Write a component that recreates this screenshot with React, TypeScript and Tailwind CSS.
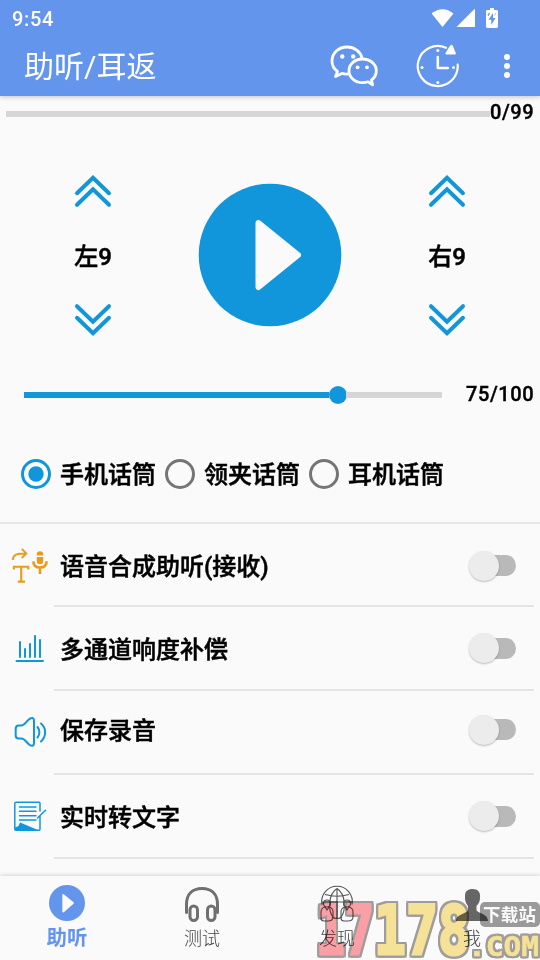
import React from 'react';

const BLUE = '#1296db';

function WifiIcon() {
  return (
    <svg width="54" height="22" viewBox="0 0 54 22" fill="#fff">
      <path d="M-0.500 4.500 Q10.500 -4.200 21.500 4.500 L10.500 18Z" />
      <path d="M43 -0.500V18H24.500Z" />
    </svg>
  );
}

function BatteryIcon() {
  return (
    <svg width="12" height="20" viewBox="0 0 12 20">
      <path d="M4 0h4v2h2.600Q12 2 12 3.400V18.600Q12 20 10.600 20H1.400Q0 20 0 18.600V3.400Q0 2 1.400 2H4Z" fill="#fff" />
      <path d="M7 5L2.500 11.800H5.300V17L9.500 10H7Z" fill="#6495ed" />
      <path d="M2 6L3.800 5L2.300 8ZM10 5L8.300 7.500" fill="#6495ed" stroke="#6495ed" strokeWidth=".6" />
    </svg>
  );
}

function WechatIcon() {
  return (
    <svg width="48" height="42" viewBox="0 0 48 42" fill="none" stroke="#fff" strokeWidth="2.800" strokeLinejoin="round">
      <path d="M32.200 13.500C30.500 6.500 24.500 2 17.200 2C8.500 2 2 8.200 2 16C2 20.500 4 24 7.500 26.500L5.500 31.600L11.800 28.400C13.800 29 15.800 29.300 18.200 29" />
      <path d="M32.500 14C25 14 19 19 19 25.700C19 32.400 25 37.700 32.500 37.700C34.500 37.700 36.200 37.500 38 36.800L42.600 39.700L41.500 35C44.700 32.700 46.300 29.500 46.300 25.700C46.300 19 40 14 32.500 14Z" />
      <g fill="#fff" stroke="none">
        <circle cx="12.300" cy="11.500" r="2.200" /><circle cx="23.200" cy="11.500" r="2.200" />
        <circle cx="27.600" cy="22.300" r="1.900" /><circle cx="37" cy="22.300" r="1.900" />
      </g>
    </svg>
  );
}

function ClockIcon() {
  return (
    <svg width="44" height="44" viewBox="0 0 44 44" fill="none" stroke="#fff" strokeWidth="2.200" strokeLinecap="round" strokeLinejoin="round">
      <path d="M30 3.800A20 20 0 1 0 41.700 20.500" />
      <path d="M21.800 13V24H31.800" strokeWidth="2.500" />
      <path d="M35.500 1.800L38.800 9.500L30.500 9.500L33.500 4.500Z" fill="#fff" />
      <g fill="#fff" stroke="none"><circle cx="21.800" cy="6.500" r="1.500" /><circle cx="21.800" cy="38.500" r="1.500" /><circle cx="6" cy="23.600" r="1.500" /><circle cx="37.500" cy="23.600" r="1.500" /></g>
    </svg>
  );
}

function Chevrons({ down = false }: { down?: boolean }) {
  return (
    <svg width="38" height="34" viewBox="0 0 38 34" className={down ? 'rotate-180' : ''} fill="none" stroke={BLUE} strokeWidth="4" strokeLinecap="round" strokeLinejoin="miter">
      <path d="M3 19.200L19 3.800L35 19.200M3 30.800L19 15.400L35 30.800" />
    </svg>
  );
}

function Channel({ label }: { label: string }) {
  return (
    <div className="flex w-[186px] flex-col items-center">
      <Chevrons />
      <div className="flex h-[95px] items-center pt-[3px] text-2xl font-medium [-webkit-text-stroke:0.5px_black]">{label}</div>
      <Chevrons down />
    </div>
  );
}

function Radio({ label, checked = false }: { label: string; checked?: boolean }) {
  return (
    <div className="flex w-36 items-center gap-[9px]">
      {checked ? (
        <div className="flex size-[30px] shrink-0 items-center justify-center rounded-full border-[3px] border-[#1296db]">
          <svg width="16" height="16" viewBox="0 0 16 16"><circle cx="8" cy="8" r="7.700" fill={BLUE} /></svg>
        </div>
      ) : (
        <div className="size-[30px] shrink-0 rounded-full border-[3px] border-[#757575]" />
      )}
      <span className="whitespace-nowrap pt-px">{label}</span>
    </div>
  );
}

function SpeechIcon() {
  return (
    <svg width="38" height="38" viewBox="0 0 38 38" fill="none" stroke="#eb9a1c" strokeWidth="1.800">
      <path d="M1.800 13C2 8 5 6.500 14.500 6.500M10.800 1.800L15.400 6.500L10.800 11" />
      <path d="M2.900 22.500V19.700H17.300V22.500M10.200 19.700V34.600M6.800 34.600H14" strokeWidth="2.100" />
      <g fill="#eb9a1c" stroke="none"><path d="M25.800 8.500V7.500a3.200 3.200 0 0 1 6.400 0V8.500ZM25.800 10H32.200V14a3.200 3.200 0 0 1-6.400 0Z" /></g>
      <path d="M21.300 15.500H22.500C23 19.500 25.500 20.500 28.900 20.500S35 19.500 35.500 15.500H36.700M29 20.500V27" strokeWidth="2.600" />
    </svg>
  );
}

function BarsIcon() {
  return (
    <svg width="38" height="38" viewBox="1 0 38 38" fill="none" stroke={BLUE} strokeWidth="2" strokeLinecap="round">
      <path d="M6.500 31H33M10 12V27M15 19V27M20 14V27M25 6V27M30 10V27" />
    </svg>
  );
}

function SpeakerIcon() {
  return (
    <svg width="38" height="38" viewBox="1 0 38 38" fill="none" stroke={BLUE} strokeWidth="2" strokeLinecap="round" strokeLinejoin="round">
      <path d="M8.500 11.500H11.500C14 11.500 16 8 18.500 5.800C21.500 3 24 3.500 24 7V29C24 32.800 21 32.500 18.500 30C16 27.500 14 24.500 11.500 24.500H8.500C6.500 24.500 5.700 23.500 5.700 21.500V15C5.700 12.800 6.500 11.500 8.500 11.500Z" />
      <path d="M27.500 13C30 16 30 20.500 27.500 23.500M31 9.500C36.500 14 36.500 22.500 31 27.500" />
    </svg>
  );
}

function NoteIcon() {
  return (
    <svg width="38" height="38" viewBox="1 0 38 38" fill="none" stroke={BLUE} strokeWidth="1.500" strokeLinecap="round">
      <path d="M30 18V31Q30 32.300 29 32.300H6Q4.800 32.300 4.800 31V5.700Q4.800 4.300 6 4.300H29Q30 4.300 30 5.500V13M35.500 12.300L27.500 20" />
      <path d="M9.500 9H26M9.500 13.300H26M9.500 17.800H26M9.500 22H26" />
      <path d="M5 32V29.500L8.500 28L10 24.500L12.500 25.500L28.500 32.300Z" fill={BLUE} stroke="none" />
    </svg>
  );
}

function Toggle() {
  return (
    <div className="toggle flex h-[31px] w-12 items-center">
      <div className="z-[1] size-[30px] shrink-0 rounded-full bg-[#ececec] shadow-[0_1px_2px_rgba(0,0,0,0.25)]" />
      <div className="-ml-4 h-[21px] w-[33px] shrink-0 rounded-r-full bg-[#b9b9b9]" />
    </div>
  );
}

function SettingRow({ icon, label, cls }: { icon: React.ReactNode; label: string; cls: string }) {
  return (
    <div className={`flex ${cls}`}>
      <div className="flex w-[54px] items-center pl-[11px]">{icon}</div>
      <div className="mr-1.5 flex flex-1 items-center justify-between border-b-2 border-[#e5e5e5] pl-1.5 pr-[17px] text-2xl font-medium">
        <span className="label [-webkit-text-stroke:0.5px_black]">{label}</span>
        <Toggle />
      </div>
    </div>
  );
}

function HeadphonesIcon() {
  return (
    <svg width="36" height="38" viewBox="0 0 36 38" fill="none" stroke="#707070" strokeWidth="3" strokeLinecap="round">
      <path d="M2.500 28.500V20.500C2.500 10 8.500 4.500 18 4.500S33.500 10 33.500 20.500V28.500" />
      <rect x="6" y="22" width="7.500" height="14.500" rx="3.750" /><rect x="23.500" y="22" width="7.500" height="14.500" rx="3.750" />
    </svg>
  );
}

function GlobeIcon() {
  return (
    <svg width="36" height="38" viewBox="0 0 36 38" fill="none" stroke="#555" strokeWidth="1.100">
      <path d="M3 20.500A15.300 15.300 0 1 1 33 20.500M3 18H33M6 10.500Q18 14 30 10.500M18 4.500V34M18 4.500C9 10 9 27 14 33M18 4.500C27 10 27 27 22 33M13 33Q18 36 23 33" />
      {[8, 28].map((x) => (
        <g key={x} transform={`translate(${x} 2)`}>
          <circle cx="0" cy="17.500" r="3.500" />
          <path d="M-2 21Q-6 22-6 26V32Q-6 35-3 35H1Q6 35 6 31V26Q6 22 2 21L0 24Z" />
        </g>
      ))}
    </svg>
  );
}

function PersonIcon() {
  return (
    <svg width="36" height="38" viewBox="0 0 36 38" fill="#666">
      <path d="M11 12C11 7 14 5 18.500 5C24 5 26.500 8 26 13.500C26 17 25 19.500 22.500 22V26.500C25 29.500 34 30 34 37H2C2 30.500 11 30 14 26.500V22C12 19.500 10.500 16 11 12Z" />
    </svg>
  );
}

function Tab({ icon, label, active = false }: { icon: React.ReactNode; label: string; active?: boolean }) {
  return (
    <div className="flex w-[135px] flex-col items-center pr-px pt-[7px]">
      <div className="flex h-10 items-center">{icon}</div>
      <span className={active ? 'pt-0.5 text-[20.500px] leading-[26px] font-bold text-[#6495ed]' : 'pt-[3px] text-[18px] leading-[26px] font-light text-[#444]'}>{label}</span>
    </div>
  );
}

function Watermark() {
  return (
    <svg className="absolute bottom-0 right-0 opacity-90 mix-blend-multiply" width="225" height="64" viewBox="0 0 225 64">
      <g
        className="[filter:drop-shadow(2px_0_0_#999595)_drop-shadow(-2px_0_0_#999595)_drop-shadow(0_2px_0_#999595)_drop-shadow(0_-2px_0_#999595)]"
        fontFamily="DejaVu Sans Mono, monospace"
        fontWeight="700"
        fontSize="68"
        strokeWidth="3"
        strokeLinejoin="miter"
      >
        <g fill="#ff989f" stroke="#ff989f"><text x="1" y="58" textLength="58" lengthAdjust="spacingAndGlyphs">17</text></g>
        <g fill="#fae58f" stroke="#fae58f"><text x="59" y="58" textLength="96" lengthAdjust="spacingAndGlyphs">178</text></g>
        <text x="153" y="60" fontSize="27" strokeWidth="0.500" fill="#fae58f" stroke="#fae58f" textLength="71" lengthAdjust="spacingAndGlyphs">.COM</text>
      </g>
      <rect x="165" y="6" width="60" height="25" rx="5" fill="#949292" />
      <text x="168" y="25" fill="#fff" fontFamily="Noto Sans CJK SC, sans-serif" fontWeight="700" fontSize="17.500" textLength="53">下载站</text>
    </svg>
  );
}

export default function App() {
  return (
    <div className="relative flex h-[960px] w-[540px] flex-col overflow-hidden bg-[#fafafa] font-[Roboto,'Noto_Sans_CJK_SC',sans-serif] text-black">
      <header className="z-10 h-24 shrink-0 bg-[#6495ed] text-white shadow-[0_1px_5px_rgba(0,0,0,0.22)]">
        <div className="flex h-9 items-center justify-between pl-3 pr-[42px]">
          <span className="pt-0.5 text-xl font-medium tracking-[0.7px]">9:54</span>
          <div className="flex items-center"><div className="pt-1"><WifiIcon /></div><div className="pb-px"><BatteryIcon /></div></div>
        </div>
        <div className="flex h-[60px] items-center pl-6">
          <h1 className="w-[306px] text-[30px] font-normal">助听/耳返</h1>
          <WechatIcon />
          <div className="ml-[38px]"><ClockIcon /></div>
          <div className="ml-11 flex flex-col gap-[3px]"><i className="size-1.5 rounded-full bg-white" /><i className="size-1.5 rounded-full bg-white" /><i className="size-1.5 rounded-full bg-white" /></div>
        </div>
      </header>

      <div className="flex h-9 shrink-0 items-center pl-1.5">
        <div className="h-1.5 w-[484px] bg-[#d6d6d6]" />
        <span className="pb-1 text-xl font-medium tracking-[0.6px] [-webkit-text-stroke:0.4px_black]">0/99</span>
      </div>

      <div className="mt-[41px] flex h-[164px] shrink-0 items-center">
        <Channel label="左9" />
        <div className="flex w-[168px] justify-center">
          <svg width="144" height="144" viewBox="0 0 144 144"><circle cx="72" cy="72" r="71.300" fill={BLUE} /><path d="M60.500 40L100 72L60.500 104Z" fill="#fafafa" stroke="#fafafa" strokeWidth="6" strokeLinejoin="round" /></svg>
        </div>
        <Channel label="右9" />
      </div>

      <div className="mt-[43px] flex h-[30px] shrink-0 items-center pl-6">
        <div className="h-1.5 w-[305px] bg-[#1296db]" />
        <div className="-ml-[0.500px] size-[18px] rounded-full bg-[#1296db]" />
        <div className="-ml-[0.500px] h-1.5 w-24 bg-[#d6d6d6]" />
        <span className="ml-6 pb-0.5 text-xl font-medium tracking-[0.6px] [-webkit-text-stroke:0.4px_black]">75/100</span>
      </div>

      <div className="flex h-[114px] shrink-0 items-center border-b-2 border-[#e5e5e5] pl-[21px] pt-4 text-2xl font-medium [-webkit-text-stroke:0.5px_black]">
        <Radio label="手机话筒" checked />
        <Radio label="领夹话筒" />
        <Radio label="耳机话筒" />
      </div>

      <div className="flex flex-col">
        <SettingRow cls="h-[83px] [&_.label]:pt-1 [&_.toggle]:mt-0.5" icon={<SpeechIcon />} label="语音合成助听(接收)" />
        <SettingRow cls="h-[84px] [&_.label]:pt-[3px]" icon={<BarsIcon />} label="多通道响度补偿" />
        <SettingRow cls="h-[84px] [&_.label]:pb-0.5 [&_.toggle]:mb-[5px]" icon={<SpeakerIcon />} label="保存录音" />
        <SettingRow cls="h-[84px] [&_.label]:pt-[3px]" icon={<NoteIcon />} label="实时转文字" />
      </div>

      <nav className="mt-auto flex h-[84px] shrink-0 bg-[#fafafa] shadow-[0_-1px_4px_rgba(0,0,0,0.15)]">
        <Tab active label="助听" icon={<svg width="36" height="36" viewBox="0 0 36 36"><circle cx="18" cy="18" r="18" fill="#6495ed" /><path d="M14.200 10L24 18L14.200 26.500Z" fill="#fafafa" stroke="#fafafa" strokeWidth="1.800" strokeLinejoin="round" /></svg>} />
        <Tab label="测试" icon={<HeadphonesIcon />} />
        <Tab label="发现" icon={<GlobeIcon />} />
        <Tab label="我" icon={<PersonIcon />} />
      </nav>
      <Watermark />
    </div>
  );
}
